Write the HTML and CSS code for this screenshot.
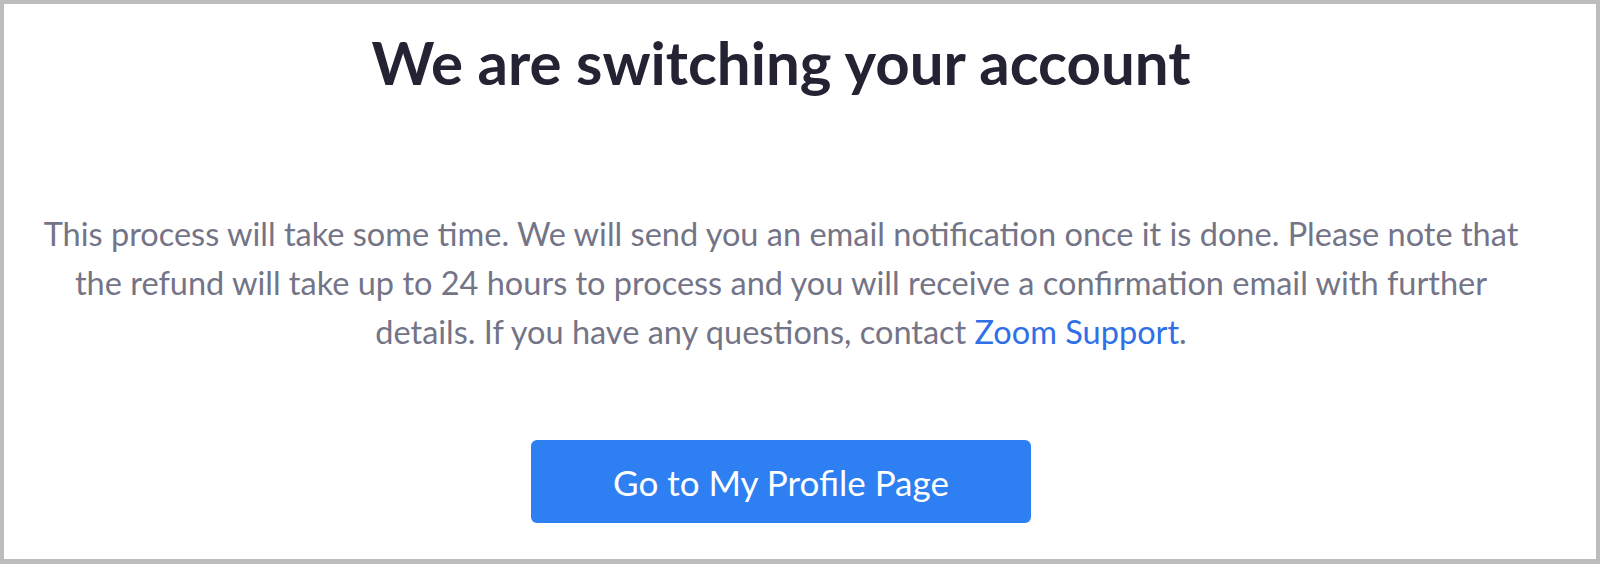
FILE: index.html
```html
<!DOCTYPE html>
<html lang="en">
<head>
    <meta charset="UTF-8">
    <title>Switching account</title>
    <link rel="stylesheet" href="styles.css">
</head>
<body>
<div class="frame">
    <div class="content">
        <h1 class="title">We are switching your account</h1>
        <p class="message">
            This process will take some time. We will send you an email notification once it is done. Please note that
            the refund will take up to 24 hours to process and you will receive a confirmation email with further
            details. If you have any questions, contact <a class="link" href="#">Zoom Support</a>.
        </p>
        <a class="btn" href="#">Go to My Profile Page</a>
    </div>
</div>
</body>
</html>
```

FILE: styles.css
```css
html, body {
    margin: 0;
    padding: 0;
    background: #fff;
}

.frame {
    box-sizing: border-box;
    width: 1600px;
    height: 564px;
    border: 4px solid #bdbdbd;
    border-bottom-width: 5px;
    padding: 22px 68px 0 30px;
    font-family: Lato, "Liberation Sans", sans-serif;
}

.content {
    display: flex;
    flex-direction: column;
    align-items: center;
    text-align: center;
}

.title {
    margin: 0;
    font-size: 60px;
    line-height: 1.2;
    font-weight: 700;
    color: #232333;
}

.message {
    margin: 111px 0 0;
    font-size: 32.5px;
    line-height: 49px;
    color: #747487;
}

.link {
    color: #2f6fe8;
    text-decoration: none;
}

.btn {
    display: flex;
    align-items: center;
    justify-content: center;
    margin-top: 84px;
    width: 500px;
    height: 83px;
    border-radius: 6px;
    background: #2e80f2;
    color: #fff;
    font-size: 35px;
    text-decoration: none;
}
```
